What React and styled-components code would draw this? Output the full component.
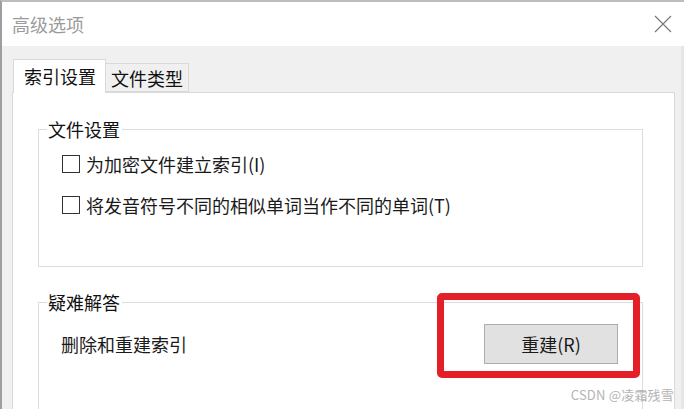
import React from 'react';
import styled, { createGlobalStyle } from 'styled-components';

const GlobalStyle = createGlobalStyle`
  html, body {
    margin: 0;
    padding: 0;
    background: #f0f0f0;
  }
  body {
    font-family: "Noto Sans CJK SC", "Noto Sans", "Liberation Sans", sans-serif;
    color: #1a1a1a;
  }
`;

const Window = styled.div`
  position: relative;
  width: 684px;
  height: 409px;
  box-sizing: border-box;
  overflow: hidden;
  background: #f0f0f0;
  border-top: 2px solid #bdbdbd;
  border-left: 2px solid #9e9e9e;
  display: flex;
  flex-direction: column;
`;

const TitleBar = styled.div`
  height: 44px;
  flex: none;
  background: #ffffff;
  display: flex;
  align-items: center;
  justify-content: space-between;
  padding: 0 11px 0 10px;
`;

const Title = styled.span`
  font-size: 18px;
  line-height: 22px;
  color: #9b9b9b;
`;

const CloseButton = styled.button`
  width: 20px;
  height: 20px;
  padding: 0;
  border: none;
  background: none;
  display: flex;
  align-items: center;
  justify-content: center;
`;

const Body = styled.div`
  flex: 1;
  display: flex;
  flex-direction: column;
  padding: 14px 6px 0 10px;
  border-right: 3px solid #e6e6e6;
`;

const TabRow = styled.div`
  display: flex;
  align-items: flex-end;
  height: 32px;
  padding-left: 1px;
  position: relative;
  z-index: 1;
`;

const Tab = styled.div`
  box-sizing: border-box;
  height: ${({ $active }) => ($active ? '34px' : '29px')};
  padding: 0 ${({ $active }) => ($active ? '9px 0 10px' : '5px')};
  margin-bottom: ${({ $active }) => ($active ? '-1px' : '0')};
  background: ${({ $active }) => ($active ? '#ffffff' : '#f0f0f0')};
  border: 1px solid #d9d9d9;
  border-bottom: ${({ $active }) => ($active ? 'none' : '1px solid #d9d9d9')};
  border-left: ${({ $active }) => ($active ? '1px solid #d9d9d9' : 'none')};
  font-size: 18px;
  line-height: ${({ $active }) => ($active ? '32px' : '28px')};
  color: #111;
  white-space: nowrap;
`;

const Panel = styled.div`
  flex: 1;
  background: #ffffff;
  border: 1px solid #d9d9d9;
  border-bottom: none;
  padding: 26px 31px 0 25px;
  display: flex;
  flex-direction: column;
  gap: 25px;
`;

const Group = styled.fieldset`
  margin: 0;
  padding: 0;
  border: 1px solid #dcdcdc;
  min-height: ${({ $height }) => $height}px;
  box-sizing: border-box;
`;

const Legend = styled.legend`
  margin-left: 8px;
  padding: 0 2px 0 1px;
  font-size: 18px;
  line-height: 20px;
  color: #111;
`;

const OptionList = styled.div`
  display: flex;
  flex-direction: column;
  gap: 17px;
  padding: 13px 0 0 23px;
`;

const Option = styled.label`
  display: flex;
  align-items: center;
  gap: 6px;
  height: 24px;
  font-size: 18px;
  line-height: 24px;
  color: #1a1a1a;
`;

const CheckBox = styled.span`
  display: block;
  width: 18px;
  height: 18px;
  box-sizing: border-box;
  border: 1px solid #333333;
  background: #ffffff;
  flex: none;
`;

const ActionRow = styled.div`
  display: flex;
  align-items: center;
  justify-content: space-between;
  padding: 12px 24px 0 22px;
`;

const ActionLabel = styled.span`
  font-size: 18px;
  line-height: 24px;
  color: #1a1a1a;
`;

const Highlight = styled.div`
  position: relative;
  &::before {
    content: '';
    position: absolute;
    left: -47px;
    right: -22px;
    top: -31px;
    bottom: -14px;
    border: 7px solid #e41f28;
    border-radius: 5px;
    pointer-events: none;
  }
`;

const Button = styled.button`
  display: block;
  width: 134px;
  height: 40px;
  box-sizing: border-box;
  background: #e1e1e1;
  border: 1px solid #adadad;
  font-family: inherit;
  font-size: 18px;
  line-height: 24px;
  color: #1a1a1a;
  padding: 0;
`;

const Watermark = styled.span`
  position: absolute;
  right: 10px;
  bottom: 6px;
  font-size: 13px;
  line-height: 16px;
  color: #b4b4b4;
  letter-spacing: 0.2px;
`;

export default function App() {
  return (
    <>
      <GlobalStyle />
      <Window>
        <TitleBar>
          <Title>高级选项</Title>
          <CloseButton aria-label="关闭">
            <svg width="18" height="18" viewBox="0 0 18 18">
              <path d="M1 1 L17 17 M17 1 L1 17" stroke="#7a7a7a" strokeWidth="1.2" fill="none" />
            </svg>
          </CloseButton>
        </TitleBar>
        <Body>
          <TabRow>
            <Tab $active>索引设置</Tab>
            <Tab>文件类型</Tab>
          </TabRow>
          <Panel>
            <Group $height={148}>
              <Legend>文件设置</Legend>
              <OptionList>
                <Option>
                  <CheckBox />
                  为加密文件建立索引(I)
                </Option>
                <Option>
                  <CheckBox />
                  将发音符号不同的相似单词当作不同的单词(T)
                </Option>
              </OptionList>
            </Group>
            <Group $height={140}>
              <Legend>疑难解答</Legend>
              <ActionRow>
                <ActionLabel>删除和重建索引</ActionLabel>
                <Highlight>
                  <Button>重建(R)</Button>
                </Highlight>
              </ActionRow>
            </Group>
          </Panel>
        </Body>
        <Watermark>CSDN @凌霜残雪</Watermark>
      </Window>
    </>
  );
}
